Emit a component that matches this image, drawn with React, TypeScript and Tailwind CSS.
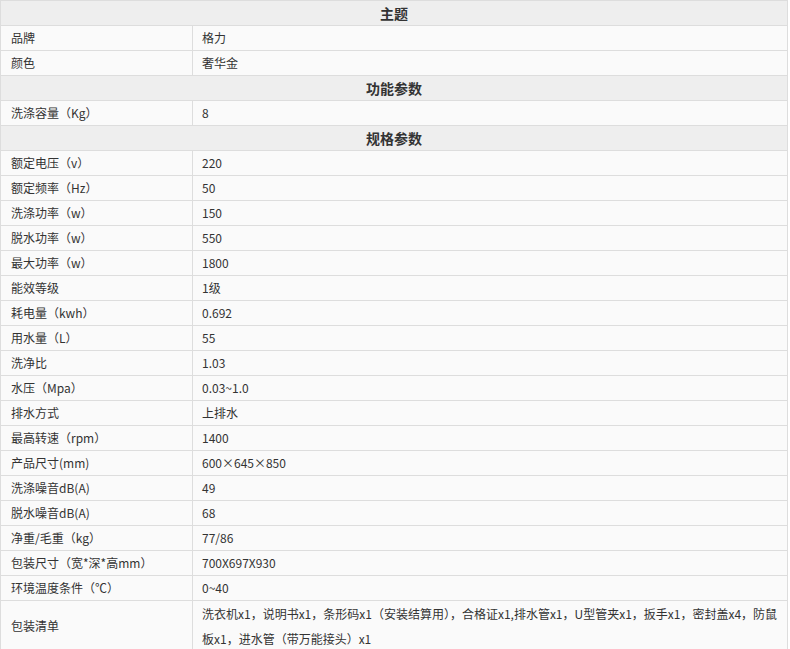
import React from 'react';

type Row = { label: string; value: React.ReactNode; multi?: boolean };
type Section = { title: string; rows: Row[] };

const sections: Section[] = [
    {
        title: '主题',
        rows: [
            { label: '品牌', value: '格力' },
            { label: '颜色', value: '奢华金' },
        ],
    },
    {
        title: '功能参数',
        rows: [{ label: '洗涤容量（Kg）', value: '8' }],
    },
    {
        title: '规格参数',
        rows: [
            { label: '额定电压（v）', value: '220' },
            { label: '额定频率（Hz）', value: '50' },
            { label: '洗涤功率（w）', value: '150' },
            { label: '脱水功率（w）', value: '550' },
            { label: '最大功率（w）', value: '1800' },
            { label: '能效等级', value: '1级' },
            { label: '耗电量（kwh）', value: '0.692' },
            { label: '用水量（L）', value: '55' },
            { label: '洗净比', value: '1.03' },
            { label: '水压（Mpa）', value: '0.03~1.0' },
            { label: '排水方式', value: '上排水' },
            { label: '最高转速（rpm）', value: '1400' },
            { label: '产品尺寸(mm)', value: '600×645×850' },
            { label: '洗涤噪音dB(A)', value: '49' },
            { label: '脱水噪音dB(A)', value: '68' },
            { label: '净重/毛重（kg）', value: '77/86' },
            { label: '包装尺寸（宽*深*高mm）', value: '700X697X930' },
            { label: '环境温度条件（℃）', value: '0~40' },
            {
                label: '包装清单',
                multi: true,
                value: (
                    <>
                        洗衣机x1，说明书x1，条形码x1（安装结算用），合格证x1,排水管x1，U型管夹x1，扳手x1，密封盖x4，防鼠
                        <br />
                        板x1，进水管（带万能接头）x1
                    </>
                ),
            },
        ],
    },
];

const App: React.FC = () => {
    return (
        <div className="w-[790px] bg-white text-[#333] text-[12px] leading-[22px] font-['Noto_Sans_CJK_SC','Noto_Sans',sans-serif]">
            <table className="w-[788px] border-collapse table-fixed">
                <colgroup>
                    <col className="w-[192px]" />
                    <col />
                </colgroup>
                <tbody>
                    {sections.map((section) => (
                        <React.Fragment key={section.title}>
                            <tr className="bg-[#eeeeee]">
                                <th colSpan={2} className="h-[25px] p-0 border border-[#dddddd] text-center text-[14px] font-bold leading-[22px] text-[#333]">
                                    {section.title}
                                </th>
                            </tr>
                            {section.rows.map((row) => (
                                <tr key={row.label} className="bg-[#fafafa]">
                                    <td className="h-[25px] py-0 pl-[10px] pr-2 border border-[#dddddd] leading-[22px] align-middle">
                                        {row.label}
                                    </td>
                                    <td
                                        className={
                                            row.multi
                                                ? 'py-0 pl-[9px] pr-1 border border-[#dddddd] leading-[25px] align-middle whitespace-nowrap'
                                                : 'h-[25px] py-0 pl-[9px] pr-1 border border-[#dddddd] leading-[22px] align-middle whitespace-nowrap'
                                        }
                                    >
                                        {row.value}
                                    </td>
                                </tr>
                            ))}
                        </React.Fragment>
                    ))}
                </tbody>
            </table>
        </div>
    );
};

export default App;
